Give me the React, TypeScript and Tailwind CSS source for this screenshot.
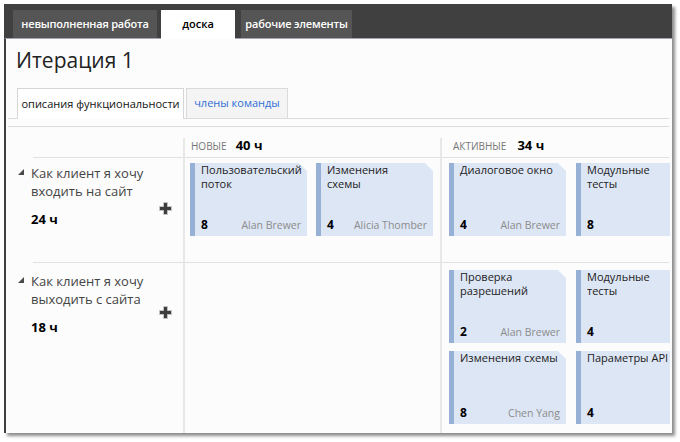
import React from "react";

type CardProps = { title: React.ReactNode; est: string; name?: string; fold?: boolean };

function Card({ title, est, name, fold = true }: CardProps) {
  return (
    <div
      className={
        fold
          ? "w-[117px] h-[73px] shrink-0 flex bg-[#dde6f4] [clip-path:polygon(0_0,calc(100%_-_8px)_0,100%_8px,100%_100%,0_100%)]"
          : "w-[117px] h-[73px] shrink-0 flex bg-[#dde6f4]"
      }
    >
      <div className="w-[5px] shrink-0 bg-[#97b0d6]" />
      <div className="flex-1 min-w-0 flex flex-col justify-between pl-[6px] pr-[6px] pt-0 pb-[4px]">
        <div className="text-[11px] leading-[14px] text-[#1c1c1c] font-medium whitespace-nowrap">{title}</div>
        <div className="flex items-baseline justify-between">
          <span className="text-[12px] leading-[14px] font-bold text-black">{est}</span>
          {name && <span className="text-[10.5px] leading-[14px] text-[#8c8c8c]">{name}</span>}
        </div>
      </div>
    </div>
  );
}

function Plus() {
  return (
    <svg width="15" height="15" viewBox="0 0 15 15">
      <path d="M5.5 1.5h4v4h4v4h-4v4h-4v-4h-4v-4h4z" fill="#3d3d3d" stroke="#c4c4c4" strokeWidth="1" />
    </svg>
  );
}

function Tri() {
  return (
    <svg width="6" height="6" viewBox="0 0 6 6">
      <polygon points="6,0 6,6 0,6" fill="#4a4a4a" />
    </svg>
  );
}

function RowHeader({ l1, l2, est, pt, plusTop }: { l1: string; l2: string; est: string; pt: string; plusTop: string }) {
  return (
    <div className={"flex pl-[12px] " + pt}>
      <div className="pt-[5px] w-[13px] shrink-0">
        <Tri />
      </div>
      <div className="flex-1">
        <div className="text-[13px] leading-[18px] text-[#444]">
          {l1}
          <br />
          {l2}
        </div>
        <div className="mt-[10px] text-[13px] leading-[18px] font-bold text-black">{est}</div>
      </div>
      <div className={"mr-[10px] " + plusTop}>
        <Plus />
      </div>
    </div>
  );
}

export default function App() {
  return (
    <div className="w-[680px] h-[442px] bg-white pt-[4px] pl-[4px] font-['Open_Sans',sans-serif]">
      <div className="w-[668px] h-[429px] flex flex-col bg-[#fcfcfc] shadow-[3px_3px_3px_rgba(0,0,0,0.45)]">
        {/* top tabs */}
        <div className="h-[34px] shrink-0 bg-[#404040] flex items-end pl-[9px]">
          <div className="w-[144px] h-[28px] bg-[#555555] flex items-center justify-center text-[11px] font-semibold text-white tracking-[-0.2px]">
            невыполненная работа
          </div>
          <div className="ml-[4px] w-[74px] h-[29px] -mb-px relative z-10 bg-white flex items-center justify-center pb-px text-[11px] font-semibold text-black">
            доска
          </div>
          <div className="ml-[6px] w-[111px] h-[28px] bg-[#555555] flex items-center justify-center text-[11px] font-semibold text-white tracking-[-0.2px]">
            рабочие элементы
          </div>
        </div>
        {/* content */}
        <div className="flex-1 min-h-0 flex flex-col border-l-2 border-l-[#404040] border-t border-t-[#a2a6b6] overflow-hidden">
          <div className="mt-[7px] pl-[10px] text-[21px] leading-[28px] text-[#222]">Итерация 1</div>
          <div className="mt-[14px] ml-[2px] mr-[3px] pl-[9px] flex items-end border-b border-[#dcdcdc]">
            <div className="w-[167px] h-[31px] -mb-px bg-white border border-b-0 border-[#d6d6d6] flex items-center justify-center text-[11px] text-[#111]">
              описания функциональности
            </div>
            <div className="ml-[2px] w-[102px] h-[30px] bg-[#f4f4f4] border border-b-0 border-[#dadada] flex items-center justify-center text-[11px] text-[#2f6fd6]">
              члены команды
            </div>
          </div>
          <div className="mt-[7px] ml-[2px] mr-[3px] h-px bg-[#dcdcdc]" />
          {/* board */}
          <div className="flex-1 min-h-0 grid grid-cols-[177px_2px_255px_2px_minmax(0,1fr)] grid-rows-[30px_1px_104px_1px_minmax(0,1fr)]">
            <div className="col-start-1 col-end-6 row-start-2 ml-[27px] mr-[3px] bg-[#e1e1e1]" />
            <div className="col-start-1 col-end-6 row-start-4 ml-[27px] mr-[3px] bg-[#e1e1e1]" />
            <div className="col-start-2 row-start-1 row-end-6 mt-[11px] bg-[#e8e8e8]" />
            <div className="col-start-4 row-start-1 row-end-6 mt-[11px] bg-[#e8e8e8]" />

            <div className="col-start-3 row-start-1 flex items-baseline pl-[6px] pt-[10px]">
              <span className="text-[10px] leading-[16px] text-[#777]">НОВЫЕ</span>
              <span className="ml-[9px] text-[13px] leading-[16px] font-bold text-black">40 ч</span>
            </div>
            <div className="col-start-5 row-start-1 flex items-baseline pl-[11px] pt-[10px]">
              <span className="text-[10px] leading-[16px] text-[#777]">АКТИВНЫЕ</span>
              <span className="ml-[11px] text-[13px] leading-[16px] font-bold text-black">34 ч</span>
            </div>

            <div className="col-start-1 row-start-3">
              <RowHeader l1="Как клиент я хочу" l2="входить на сайт" est="24 ч" pt="pt-[6px]" plusTop="mt-[37px]" />
            </div>
            <div className="col-start-3 row-start-3 flex gap-[9px] pl-[5px] pt-[5px]">
              <Card title={<>Пользовательский<br />поток</>} est="8" name="Alan Brewer" />
              <Card title={<>Изменения<br />схемы</>} est="4" name="Alicia Thomber" />
            </div>
            <div className="col-start-5 row-start-3 flex gap-[10px] pl-[7px] pt-[5px] mr-[2px] overflow-hidden">
              <Card title="Диалоговое окно" est="4" name="Alan Brewer" />
              <Card title={<>Модульные<br />тесты</>} est="8" fold={false} />
            </div>

            <div className="col-start-1 row-start-5">
              <RowHeader l1="Как клиент я хочу" l2="выходить с сайта" est="18 ч" pt="pt-[9px]" plusTop="mt-[33px]" />
            </div>
            <div className="col-start-5 row-start-5 pl-[7px] pt-[7px] mr-[2px] overflow-hidden">
              <div className="flex gap-[10px]">
                <Card title={<>Проверка<br />разрешений</>} est="2" name="Alan Brewer" />
                <Card title={<>Модульные<br />тесты</>} est="4" fold={false} />
              </div>
              <div className="flex gap-[10px] mt-[8px]">
                <Card title="Изменения схемы" est="8" name="Chen Yang" />
                <Card title="Параметры API" est="4" fold={false} />
              </div>
            </div>
          </div>
        </div>
      </div>
    </div>
  );
}
